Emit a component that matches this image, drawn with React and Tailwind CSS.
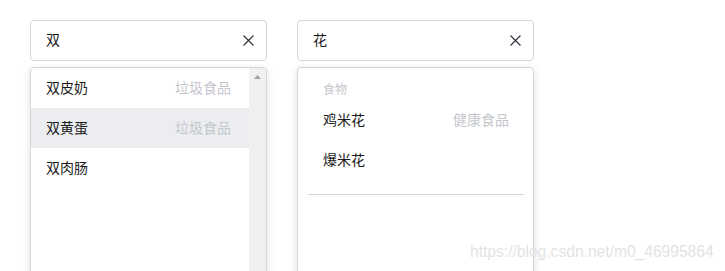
import React from "react";

const font = { fontFamily: '"Liberation Sans", "Noto Sans CJK SC", sans-serif' };

function XIcon() {
  return (
    <svg width="11" height="11" viewBox="0 0 11 11" className="block">
      <path d="M0.5 0.5 L10.5 10.5 M10.5 0.5 L0.5 10.5" stroke="#2c2f3a" strokeWidth="1.1" fill="none" />
    </svg>
  );
}

function Input({ value }) {
  return (
    <div className="h-[41px] w-[237px] rounded-[4px] border border-[#d4d6db] bg-white flex items-center pl-[15px] pr-[12px]">
      <span className="flex-1 text-[14px] text-[#1a1a1a]">{value}</span>
      <XIcon />
    </div>
  );
}

export default function App() {
  return (
    <div className="relative w-[725px] h-[271px] overflow-hidden bg-white" style={font}>
      <div className="flex gap-[30px] pl-[30px] pt-[20px]">
        {/* left */}
        <div className="flex flex-col gap-[6px]">
          <Input value="双" />
          <div className="h-[230px] w-[237px] rounded-[4px] border border-[#d4d6db] bg-white shadow-[0_2px_8px_0_rgba(0,0,0,0.12)] flex overflow-hidden">
            <div className="flex-1 flex flex-col text-[14px]">
              <div className="h-[40px] flex items-center justify-between pl-[15px] pr-[18px]">
                <span className="text-[#1a1a1a]">双皮奶</span>
                <span className="text-[#c4c6cc]">垃圾食品</span>
              </div>
              <div className="h-[40px] flex items-center justify-between pl-[15px] pr-[18px] bg-[#ebedf0]">
                <span className="text-[#1a1a1a]">双黄蛋</span>
                <span className="text-[#c4c6cc]">垃圾食品</span>
              </div>
              <div className="h-[40px] flex items-center pl-[15px] pr-[18px]">
                <span className="text-[#1a1a1a]">双肉肠</span>
              </div>
            </div>
            <div className="w-[17px] bg-[#f0f0f0] flex justify-center pt-[7px]">
              <svg width="7" height="4" viewBox="0 0 7 4" className="block">
                <path d="M3.5 0 L7 4 L0 4 Z" fill="#a3a3a3" />
              </svg>
            </div>
          </div>
        </div>
        {/* right */}
        <div className="flex flex-col gap-[6px]">
          <Input value="花" />
          <div className="h-[230px] w-[237px] rounded-[4px] border border-[#d4d6db] bg-white shadow-[0_2px_8px_0_rgba(0,0,0,0.12)] flex flex-col pt-[13px]">
            <div className="h-[19px] leading-[19px] pl-[25px] text-[12px] text-[#c4c6cc]">食物</div>
            <div className="h-[40px] flex items-center justify-between pl-[25px] pr-[24px] text-[14px]">
              <span className="text-[#1a1a1a]">鸡米花</span>
              <span className="text-[#c4c6cc]">健康食品</span>
            </div>
            <div className="h-[40px] flex items-center pl-[25px] pr-[24px] text-[14px]">
              <span className="text-[#1a1a1a]">爆米花</span>
            </div>
            <div className="mt-[14px] ml-[10px] mr-[9px] h-px bg-[#d4d6db]" />
          </div>
        </div>
      </div>
      <div className="absolute left-[470px] top-[242px] text-[15.6px] leading-[20px] text-[#e3e3e3] whitespace-nowrap">
        https://blog.csdn.net/m0_46995864
      </div>
    </div>
  );
}
